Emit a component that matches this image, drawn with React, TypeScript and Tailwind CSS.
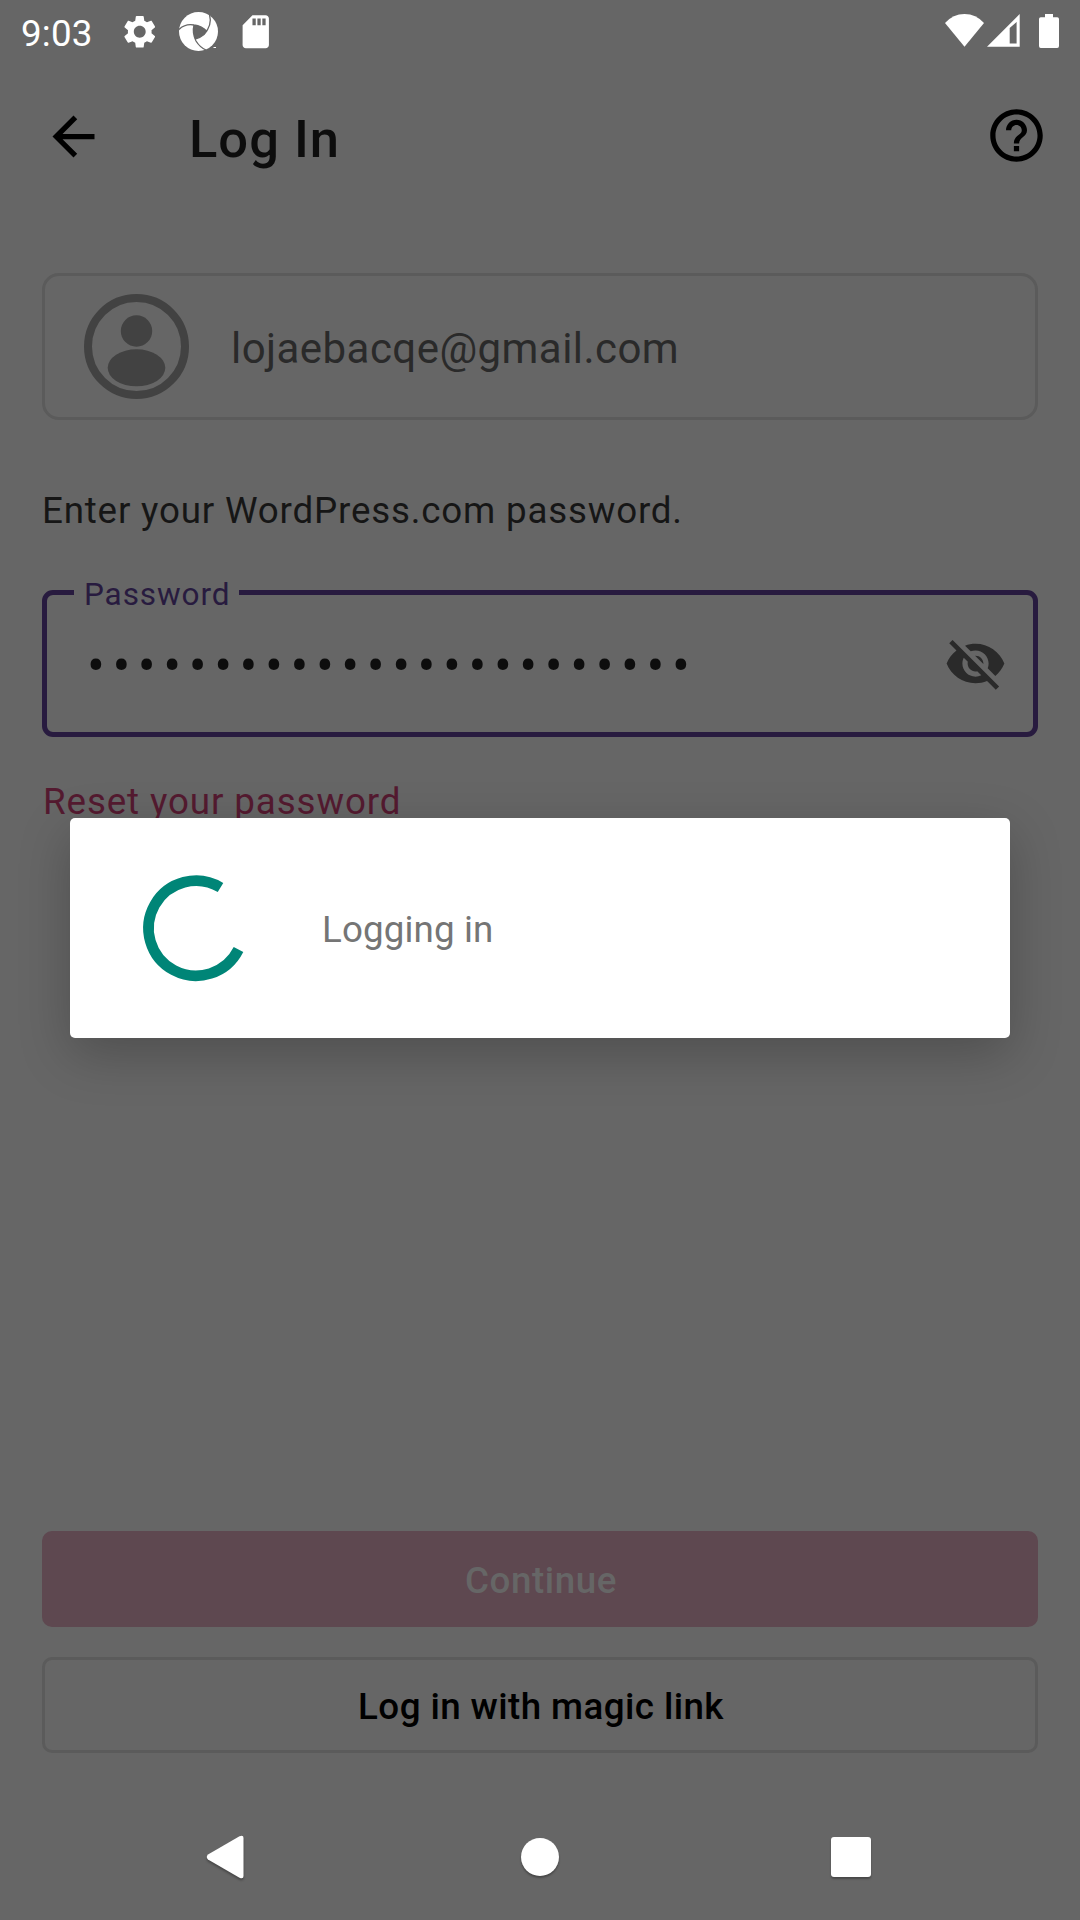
import React from "react";

function StatusBar() {
  return (
    <header className="flex h-[63px] shrink-0 items-start text-white">
      <span className="mt-[12px] ml-[21px] w-[71px] text-[36.75px] leading-[43px] tracking-[0.2px] whitespace-nowrap">9:03</span>
      <svg className="mt-[12px] ml-[28px] h-[39.5px] w-[39.5px]" viewBox="0 0 24 24" fill="currentColor">
        <path d="M19.14 12.94c.04-.3.06-.61.06-.94 0-.32-.02-.64-.07-.94l2.03-1.58c.18-.14.23-.41.12-.61l-1.92-3.32c-.12-.22-.37-.29-.59-.22l-2.39.96c-.5-.38-1.03-.7-1.62-.94L14.4 2.81c-.04-.24-.24-.41-.48-.41h-3.84c-.24 0-.43.17-.47.41l-.36 2.54c-.59.24-1.13.57-1.62.94l-2.39-.96c-.22-.08-.47 0-.59.22L2.74 8.87c-.12.21-.08.47.12.61l2.03 1.58c-.05.3-.09.63-.09.94s.02.64.07.94l-2.03 1.58c-.18.14-.23.41-.12.61l1.92 3.32c.12.22.37.29.59.22l2.39-.96c.5.38 1.03.7 1.62.94l.36 2.54c.05.24.24.41.48.41h3.84c.24 0 .44-.17.47-.41l.36-2.54c.59-.24 1.13-.56 1.62-.94l2.39.96c.22.08.47 0 .59-.22l1.92-3.32c.12-.22.07-.47-.12-.61l-2.01-1.58zM12 15.6c-1.98 0-3.6-1.62-3.6-3.6s1.62-3.6 3.6-3.6 3.6 1.62 3.6 3.6-1.62 3.6-3.6 3.6z" />
      </svg>
      <svg className="mt-[12px] ml-[19px] h-[39px] w-[39px]" viewBox="0 0 39 39">
        <circle cx="19.5" cy="19.5" r="19.5" fill="#fff" />
        <path d="M15 13 Q22 13 28 19.500 Q24 25 16 27 Q13.500 20 15 13Z" fill="#666" />
        <g fill="none" stroke="#666" strokeWidth="1.3">
          <path d="M0 17.500 Q6 11.500 15 13 Q23 14 28 19.500" />
          <path d="M30.500 2.500 Q33.500 13 25 22.500 Q21 26 16 27" />
          <path d="M15 13 Q13 21 17 29 Q21 35.500 27 38" />
        </g>
        <path d="M34.500 35.500h2.500" stroke="#fff" strokeWidth="1" />
      </svg>
      <svg className="mt-[12px] ml-[18.5px] h-[39.5px] w-[39.5px]" viewBox="0 0 24 24" fill="currentColor">
        <path d="M18 2h-8L4.020 8 4 20c0 1.100.9 2 2 2h12c1.100 0 2-.9 2-2V4c0-1.100-.9-2-2-2zm-6 6h-2V4h2v4zm3 0h-2V4h2v4zm3 0h-2V4h2v4z" />
      </svg>
      <svg className="mt-[14px] ml-auto h-[33px] w-[39px]" viewBox="0 0 39 33" fill="currentColor">
        <path d="M0 9 Q8 0 19.500 0 Q31 0 39 9 L19.500 32.700Z" />
      </svg>
      <svg className="mt-[14px] ml-[3px] h-[33px] w-[33px]" viewBox="0 0 33 33" fill="currentColor">
        <path fillRule="evenodd" d="M0 32.700 L32.700 0 V32.700Z M22.700 14 V29.500 H29.600 V8Z" />
      </svg>
      <svg className="mt-[14px] mr-[21px] ml-[19px] h-[34px] w-[20px]" viewBox="0 0 20 34" fill="currentColor">
        <path d="M6 0h8v3.300h4.200q1.800 0 1.800 1.800V32q0 2-1.800 2H1.800Q0 34 0 32V5.100q0-1.800 1.800-1.800H6z" />
      </svg>
    </header>
  );
}

function AppBar() {
  return (
    <div className="flex h-[147px] shrink-0 items-center pr-[32px] pl-[42px]">
      <svg className="size-[63px]" viewBox="0 0 24 24" fill="#000">
        <path d="M20 11H7.830l5.590-5.590L12 4l-8 8 8 8 1.410-1.410L7.830 13H20v-2z" />
      </svg>
      <h1 className="mt-[5px] ml-[84px] text-[52.5px] leading-[62px] font-medium tracking-[1px] text-[#0d0d0d]">Log In</h1>
      <svg className="mb-[2px] ml-auto size-[63px]" viewBox="0 0 24 24" fill="#000">
        <path d="M11 18h2v-2h-2v2zm1-16C6.480 2 2 6.480 2 12s4.480 10 10 10 10-4.480 10-10S17.520 2 12 2zm0 18c-4.410 0-8-3.590-8-8s3.590-8 8-8 8 3.590 8 8-3.590 8-8 8zm0-14c-2.210 0-4 1.790-4 4h2c0-1.100.9-2 2-2s2 .9 2 2c0 2-3 1.750-3 5h2c0-2.250 3-2.500 3-5 0-2.210-1.790-4-4-4z" />
      </svg>
    </div>
  );
}

function PasswordField() {
  return (
    <div className="relative mt-[58px] flex h-[147px] shrink-0 items-center rounded-[11px] border-[5px] border-[#281b3f] pr-[26px] pl-[40px]">
      <span className="absolute -top-[19px] left-[27px] w-[165px] bg-[#666666] pl-[10px] text-[31.5px] leading-[37px] tracking-[0.9px] whitespace-nowrap text-[#281b3f]">Password</span>
      <span className="mt-[4px] text-[53px] leading-[50px] tracking-[7.55px] whitespace-nowrap text-[#0d0d0d]">{"•".repeat(24)}</span>
      <svg className="ml-auto size-[63px]" viewBox="0 0 24 24" fill="#2a2a2a">
        <path d="M12 7c2.760 0 5 2.240 5 5 0 .65-.13 1.260-.36 1.830l2.920 2.920c1.510-1.260 2.700-2.890 3.430-4.750-1.730-4.390-6-7.500-11-7.500-1.400 0-2.740.25-3.980.7l2.160 2.160C10.740 7.130 11.350 7 12 7zM2 4.270l2.280 2.280.46.46C3.080 8.300 1.780 10.020 1 12c1.730 4.390 6 7.500 11 7.500 1.550 0 3.030-.3 4.380-.84l.42.42L19.730 22 21 20.730 3.270 3 2 4.270zM7.530 9.800l1.550 1.550c-.05.21-.08.43-.08.65 0 1.660 1.340 3 3 3 .22 0 .44-.03.65-.08l1.550 1.550c-.67.33-1.410.53-2.200.53-2.760 0-5-2.240-5-5 0-.79.2-1.530.53-2.200zm4.310-.78l3.150 3.150.02-.16c0-1.660-1.340-3-3-3l-.17.01z" />
      </svg>
    </div>
  );
}

function NavBar() {
  return (
    <nav className="flex h-[126px] shrink-0 items-center justify-between px-[204px]">
      <svg className="h-[50px] w-[42px] drop-shadow-[0_2px_1px_rgba(0,0,0,0.3)]" viewBox="0 0 42 50" fill="#fff">
        <path d="M4 22.500 L35.500 4.200 Q39.500 2.500 39.500 6 V44 Q39.500 47.500 35.500 45.800 L4 27.500 Q1.500 25 4 22.500Z" />
      </svg>
      <div className="ml-[3px] size-[38px] rounded-full bg-white shadow-[0_2px_2px_rgba(0,0,0,0.3)]" />
      <div className="mr-[5px] size-[40px] rounded-[3px] bg-white shadow-[0_2px_2px_rgba(0,0,0,0.3)]" />
    </nav>
  );
}

function ProgressDialog() {
  return (
    <div className="absolute top-[818px] left-[70px] flex h-[220px] w-[940px] items-center rounded-[5px] bg-white shadow-[0_16px_52px_rgba(0,0,0,0.23)]">
      <svg className="ml-[63px] size-[126px]" viewBox="0 0 126 126">
        <path d="M87.500 22.500 A47.500 47.500 0 1 0 105.500 84.500" fill="none" stroke="#008577" strokeWidth="10.7" />
      </svg>
      <span className="mt-[3px] ml-[63px] text-[36.75px] leading-[43px] tracking-[0.12px] whitespace-nowrap text-[#757575]">Logging in</span>
    </div>
  );
}

export default function App() {
  return (
    <div className="relative flex h-[1920px] w-[1080px] flex-col overflow-hidden bg-[#666666] font-['Roboto',sans-serif]">
      <StatusBar />
      <AppBar />
      <main className="flex grow flex-col px-[42px] pt-[63px]">
        <div className="flex h-[147px] shrink-0 items-center rounded-[17px] border-[3px] border-[#5b5b5b] pl-[39px]">
          <svg className="size-[105px]" viewBox="0 0 105 105" fill="#424242">
            <circle cx="52.5" cy="52.5" r="48.5" fill="none" stroke="#424242" strokeWidth="8" />
            <circle cx="52.5" cy="37" r="15.7" />
            <ellipse cx="52.5" cy="73.800" rx="28.8" ry="18.500" />
          </svg>
          <span className="mt-[5px] ml-[42px] text-[42px] leading-[50px] tracking-[0.45px] text-[#2a2a2a]">lojaebacqe@gmail.com</span>
        </div>
        <p className="mt-[69px] h-[43px] text-[36.75px] leading-[43px] tracking-[0.8px] whitespace-nowrap text-[#161616]">Enter your WordPress.com password.</p>
        <PasswordField />
        <a className="mt-[43px] ml-px text-[36.75px] leading-[43px] tracking-[0.88px] whitespace-nowrap text-[#541a30]">Reset your password</a>
        <div className="mt-auto mb-[41px] flex flex-col gap-[30px]">
          <button className="h-[96px] rounded-[10px] bg-[#5e4850] pt-[4px] pl-[2px] text-[36.75px] font-medium tracking-[0.55px] text-[#666666]">Continue</button>
          <button className="h-[96px] rounded-[10px] border-[3px] border-[#5b5b5b] pt-[4px] pl-[2px] text-[36.75px] font-medium tracking-[0.41px] text-black">Log in with magic link</button>
        </div>
      </main>
      <NavBar />
      <ProgressDialog />
    </div>
  );
}
